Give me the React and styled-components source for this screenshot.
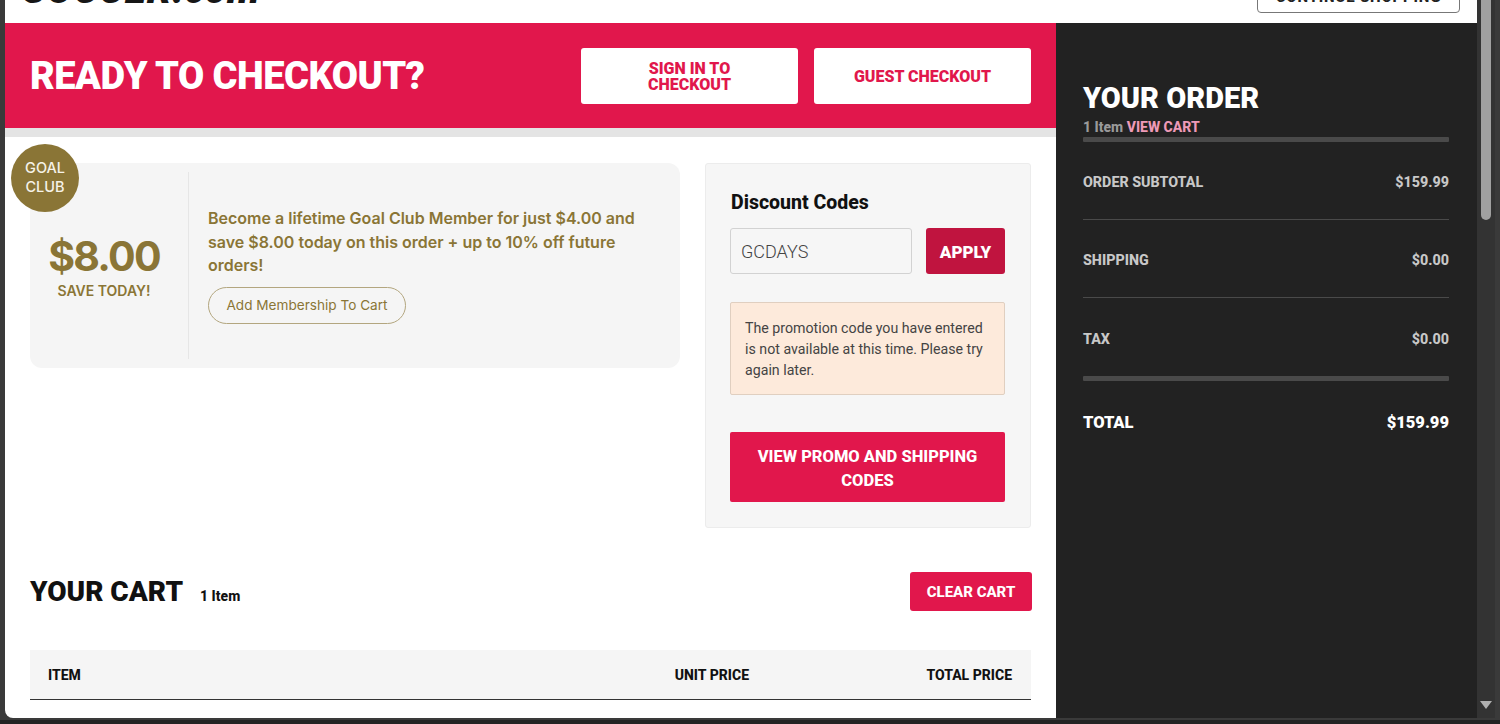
import React from 'react';
import styled, { createGlobalStyle } from 'styled-components';

const display = '"Roboto", "Liberation Sans", sans-serif';
const rounded = '"Inter", "Lato", sans-serif';

const GlobalPage = createGlobalStyle`
  html, body {
    margin: 0;
    padding: 0;
    height: 724px;
    overflow: hidden;
    background: #3a3a3a;
  }
  * {
    box-sizing: border-box;
  }
`;

const Screen = styled.div`
  display: flex;
  width: 1500px;
  height: 724px;
  padding: 0 5px 2px 5px;
  border-bottom: 4px solid #232323;
  background: #3a3a3a;
  overflow: hidden;
`;

const Page = styled.div`
  display: flex;
  flex-direction: column;
  width: 1472px;
  height: 718px;
  border-bottom-left-radius: 8px;
  overflow: hidden;
  background: #fff;
`;

const TopBar = styled.header`
  display: flex;
  flex: 0 0 23px;
  justify-content: space-between;
  height: 23px;
  padding: 0 17px;
  overflow: hidden;
  background: #fff;
`;

const Logo = styled.div`
  margin-top: -30px;
  color: #161616;
  font-family: ${display};
  font-size: 39px;
  font-style: italic;
  font-weight: 900;
  letter-spacing: 0.8px;
  line-height: 40px;
`;

const ContinueButton = styled.button`
  width: 203px;
  height: 32px;
  margin-top: -19px;
  border: 1px solid #777;
  border-radius: 4px;
  background: #fff;
  color: #222;
  font-family: ${display};
  font-size: 15px;
  font-weight: 800;
  letter-spacing: 0.8px;
`;

const Columns = styled.div`
  display: flex;
  flex: 1;
  min-height: 0;
`;

const Main = styled.main`
  flex: 0 0 1051px;
  width: 1051px;
  overflow: hidden;
`;

const Hero = styled.section`
  display: flex;
  align-items: center;
  justify-content: space-between;
  height: 114px;
  padding: 0 25px;
  border-bottom: 9px solid #e4e4e4;
  background: #e1174c;
`;

const HeroTitle = styled.h1`
  margin: 0;
  color: #fff;
  font-family: ${display};
  font-size: 38px;
  font-weight: 900;
  letter-spacing: -0.5px;
  line-height: 44px;
`;

const HeroActions = styled.div`
  display: flex;
  gap: 16px;
`;

const HeroButton = styled.button`
  width: 217px;
  height: 56px;
  padding: 3px 10px 0;
  border: 0;
  border-radius: 3px;
  background: #fff;
  color: #e1174c;
  font-family: ${display};
  font-size: 16px;
  font-weight: 900;
  line-height: 16px;
`;

const Body = styled.div`
  padding: 26px 25px 0 25px;
`;

const TopRow = styled.div`
  display: flex;
  align-items: flex-start;
  gap: 25px;
`;

const ClubCard = styled.section`
  position: relative;
  display: flex;
  flex: 0 0 650px;
  height: 205px;
  padding: 9px 0;
  border-radius: 12px;
  background: #f5f5f5;
`;

const ClubBadge = styled.div`
  position: absolute;
  top: -19px;
  left: -19px;
  display: flex;
  align-items: center;
  justify-content: center;
  width: 68px;
  height: 68px;
  padding-bottom: 1px;
  border-radius: 50%;
  background: #8a7536;
  color: #f5f2e8;
  font-family: ${rounded};
  font-size: 14.5px;
  font-weight: 500;
  line-height: 18.5px;
  text-align: center;
`;

const SaveColumn = styled.div`
  display: flex;
  flex: 0 0 159px;
  flex-direction: column;
  align-items: center;
  padding: 60px 10px 0 0;
  border-right: 1px solid #e6e6e6;
  color: #8a7536;
  font-family: ${rounded};
`;

const SaveAmount = styled.div`
  font-size: 41px;
  font-weight: 700;
  letter-spacing: -1.8px;
  line-height: 48px;
`;

const SaveLabel = styled.div`
  margin-top: 1px;
  font-size: 14px;
  font-weight: 600;
  line-height: 20px;
`;

const OfferColumn = styled.div`
  padding: 35px 40px 0 19px;
  color: #8a7536;
  font-family: ${rounded};
`;

const OfferText = styled.p`
  margin: 0 0 9px;
  font-size: 16px;
  font-weight: 600;
  line-height: 23.5px;
`;

const OutlineButton = styled.button`
  width: 198px;
  height: 37px;
  border: 1px solid #b3a67f;
  border-radius: 19px;
  background: transparent;
  color: #8a7536;
  font-family: ${rounded};
  font-size: 13.6px;
  font-weight: 400;
`;

const DiscountPanel = styled.section`
  flex: 0 0 326px;
  height: 365px;
  padding: 25px 25px 25px 24px;
  border: 1px solid #ececec;
  border-radius: 3px;
  background: #f6f6f6;
`;

const PanelTitle = styled.h2`
  margin: 0 0 12px;
  padding-left: 1px;
  color: #111;
  font-family: ${display};
  font-size: 19.5px;
  font-weight: 800;
  line-height: 27px;
`;

const CodeRow = styled.div`
  display: flex;
  justify-content: space-between;
`;

const CodeInput = styled.input`
  width: 182px;
  height: 46px;
  padding: 0 10px;
  border: 1px solid #d2d2d2;
  border-radius: 3px;
  background: #f6f6f6;
  color: #444;
  font-family: ${display};
  font-size: 18px;
  font-weight: 300;
`;

const ApplyButton = styled.button`
  width: 79px;
  height: 46px;
  padding-top: 2px;
  border: 0;
  border-radius: 3px;
  background: #c0143f;
  color: #fff;
  font-family: ${display};
  font-size: 17px;
  font-weight: 900;
`;

const Alert = styled.div`
  height: 93px;
  margin-top: 28px;
  padding: 15px 14px;
  border: 1px solid #e0cfc0;
  border-radius: 2px;
  background: #fdeadb;
  color: #444;
  font-family: ${display};
  font-size: 14.2px;
  line-height: 21px;
`;

const PromoButton = styled.button`
  display: block;
  width: 275px;
  height: 70px;
  margin-top: 37px;
  padding: 4px 20px 0;
  border: 0;
  border-radius: 2px;
  background: #e1174c;
  color: #fff;
  font-family: ${display};
  font-size: 16.5px;
  font-weight: 800;
  line-height: 24px;
`;

const CartHeader = styled.div`
  display: flex;
  align-items: center;
  justify-content: space-between;
  height: 39px;
  margin-top: 44px;
`;

const CartTitle = styled.div`
  display: flex;
  align-items: baseline;
  gap: 17px;
  color: #111;
  font-family: ${display};
`;

const CartHeading = styled.h2`
  margin: 0;
  font-size: 28px;
  font-weight: 900;
`;

const CartCount = styled.span`
  font-size: 14px;
  font-weight: 800;
`;

const ClearButton = styled.button`
  width: 122px;
  height: 39px;
  margin-right: -1px;
  border: 0;
  border-radius: 3px;
  background: #e1174c;
  color: #fff;
  font-family: ${display};
  font-size: 15px;
  font-weight: 800;
`;

const TableHead = styled.div`
  display: grid;
  grid-template-columns: 1fr 150px 263px;
  align-items: center;
  height: 50px;
  margin-top: 39px;
  padding-right: 19px;
  border-bottom: 1px solid #333;
  background: #f5f5f5;
  color: #111;
  font-family: ${display};
  font-size: 14px;
  font-weight: 800;
`;

const HeadCell = styled.div`
  padding-left: ${(p) => (p.$first ? '18px' : '0')};
  text-align: ${(p) => (p.$first ? 'left' : 'right')};
`;

const Aside = styled.aside`
  flex: 1;
  padding: 58px 28px 0 27px;
  background: #222;
  font-family: ${display};
`;

const OrderHeading = styled.h2`
  margin: 0;
  color: #fff;
  font-size: 29px;
  font-weight: 900;
  line-height: 34px;
`;

const ItemLine = styled.div`
  margin-top: 3px;
  color: #9a9a9a;
  font-size: 14px;
  font-weight: 800;
  line-height: 19px;
`;

const ViewCart = styled.span`
  color: #ee9ab7;
`;

const ThickRule = styled.div`
  height: 5px;
  border-radius: 1px;
  background: #4a4a4a;
`;

const SummaryRow = styled.div`
  display: flex;
  align-items: center;
  justify-content: space-between;
  height: 78px;
  padding-top: 3px;
  border-bottom: ${(p) => (p.$last ? '0' : '1px solid #4a4a4a')};
  color: #c8c8c8;
  font-size: 14.3px;
  font-weight: 800;
`;

const TotalRow = styled.div`
  display: flex;
  align-items: center;
  justify-content: space-between;
  height: 82px;
  color: #fff;
  font-size: 16.5px;
  font-weight: 900;
`;

const Scrollbar = styled.div`
  position: relative;
  flex: 0 0 18px;
  width: 18px;
  height: 718px;
  background: #333;
`;

const ScrollThumb = styled.div`
  position: absolute;
  top: 0;
  left: 4px;
  width: 10px;
  height: 220px;
  border-radius: 0 0 5px 5px;
  background: #a0a0a0;
`;

const ScrollArrow = styled.div`
  position: absolute;
  bottom: 9px;
  left: 3px;
  width: 0;
  height: 0;
  border-left: 6px solid transparent;
  border-right: 6px solid transparent;
  border-top: 8px solid #b0b0b0;
`;

export default function App() {
  return (
    <Screen>
      <GlobalPage />
      <Page>
        <TopBar>
          <Logo>SOCCER.com</Logo>
          <ContinueButton>CONTINUE SHOPPING</ContinueButton>
        </TopBar>
        <Columns>
          <Main>
            <Hero>
              <HeroTitle>READY TO CHECKOUT?</HeroTitle>
              <HeroActions>
                <HeroButton>SIGN IN TO<br />CHECKOUT</HeroButton>
                <HeroButton>GUEST CHECKOUT</HeroButton>
              </HeroActions>
            </Hero>
            <Body>
              <TopRow>
                <ClubCard>
                  <ClubBadge>GOAL<br />CLUB</ClubBadge>
                  <SaveColumn>
                    <SaveAmount>$8.00</SaveAmount>
                    <SaveLabel>SAVE TODAY!</SaveLabel>
                  </SaveColumn>
                  <OfferColumn>
                    <OfferText>
                      Become a lifetime Goal Club Member for just $4.00 and save $8.00 today on this order + up to 10% off future orders!
                    </OfferText>
                    <OutlineButton>Add Membership To Cart</OutlineButton>
                  </OfferColumn>
                </ClubCard>
                <DiscountPanel>
                  <PanelTitle>Discount Codes</PanelTitle>
                  <CodeRow>
                    <CodeInput defaultValue="GCDAYS" />
                    <ApplyButton>APPLY</ApplyButton>
                  </CodeRow>
                  <Alert>The promotion code you have entered is not available at this time. Please try again later.</Alert>
                  <PromoButton>VIEW PROMO AND SHIPPING CODES</PromoButton>
                </DiscountPanel>
              </TopRow>
              <CartHeader>
                <CartTitle>
                  <CartHeading>YOUR CART</CartHeading>
                  <CartCount>1 Item</CartCount>
                </CartTitle>
                <ClearButton>CLEAR CART</ClearButton>
              </CartHeader>
              <TableHead>
                <HeadCell $first>ITEM</HeadCell>
                <HeadCell>UNIT PRICE</HeadCell>
                <HeadCell>TOTAL PRICE</HeadCell>
              </TableHead>
            </Body>
          </Main>
          <Aside>
            <OrderHeading>YOUR ORDER</OrderHeading>
            <ItemLine>1 Item <ViewCart>VIEW CART</ViewCart></ItemLine>
            <ThickRule />
            <SummaryRow><span>ORDER SUBTOTAL</span><span>$159.99</span></SummaryRow>
            <SummaryRow><span>SHIPPING</span><span>$0.00</span></SummaryRow>
            <SummaryRow $last><span>TAX</span><span>$0.00</span></SummaryRow>
            <ThickRule />
            <TotalRow><span>TOTAL</span><span>$159.99</span></TotalRow>
          </Aside>
        </Columns>
      </Page>
      <Scrollbar>
        <ScrollThumb />
        <ScrollArrow />
      </Scrollbar>
    </Screen>
  );
}
